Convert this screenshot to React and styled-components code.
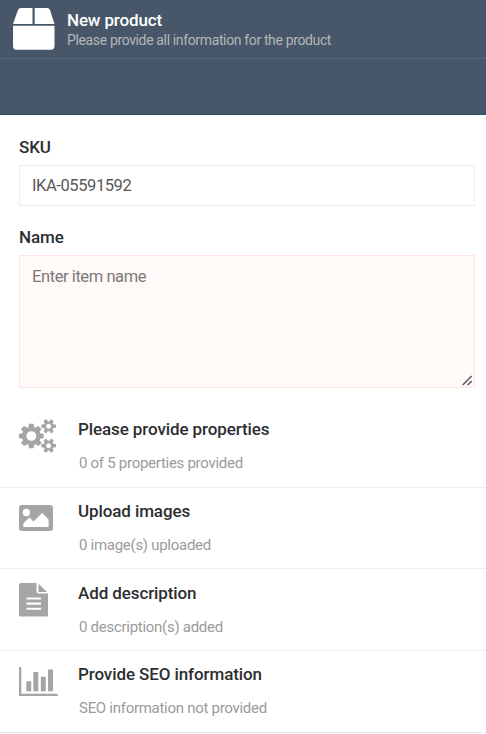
import React from "react";
import styled, { createGlobalStyle } from "styled-components";

const GlobalStyle = createGlobalStyle`
  * { box-sizing: border-box; }
  html, body { margin: 0; background: #fff; overflow: hidden; }
  body { font-family: Roboto, "Liberation Sans", sans-serif; color: #2d2e30; }
`;

const Page = styled.div`
  width: 486px;
  height: 734px;
  overflow: hidden;
`;

const Header = styled.header`
  height: 115px;
  background: #475769;
  border-bottom: 1px solid #364a62;
`;

const HeaderBar = styled.div`
  display: flex;
  height: 59px;
  padding: 8px 12px 0 13px;
  gap: 12px;
  border-bottom: 1px solid #58697b;
`;

const HeaderText = styled.div`
  padding-top: 2px;
`;

const HeaderTitle = styled.h1`
  margin: 0;
  font-size: 17px;
  line-height: 20px;
  font-weight: 500;
  letter-spacing: -0.15px;
  color: #fff;
`;

const HeaderSubtitle = styled.p`
  margin: 0;
  font-size: 14px;
  line-height: 20px;
  letter-spacing: -0.36px;
  color: #b4b6b9;
`;

const Form = styled.form`
  padding: 22px 11px 0 19px;
  height: 291px;
`;

const Label = styled.label`
  display: block;
  height: 28px;
  font-size: 17px;
  line-height: 20px;
  font-weight: 500;
  letter-spacing: -0.1px;
`;

const TextInput = styled.input`
  display: block;
  width: 100%;
  height: 41px;
  margin-bottom: 21px;
  padding: 0 12px 1px;
  border: 1px solid #ebecf3;
  border-radius: 0;
  outline: none;
  font: 400 16.5px/20px Roboto, sans-serif;
  letter-spacing: -0.42px;
  color: #58595b;
`;

const AreaWrap = styled.div`
  position: relative;
  height: 133px;
`;

const TextArea = styled.textarea`
  display: block;
  width: 100%;
  height: 100%;
  padding: 11px 12px;
  border: 1px solid #fde5e3;
  border-radius: 0;
  background: #fff9f7;
  outline: none;
  resize: none;
  font: 400 16.5px/20px Roboto, sans-serif;
  letter-spacing: -0.42px;
  &::placeholder { color: #7b7978; }
`;

const Grip = styled.svg`
  position: absolute;
  right: 2px;
  bottom: 2px;
`;

const StepList = styled.ul`
  margin: 0;
  padding: 0;
  list-style: none;
`;

const Step = styled.li`
  display: flex;
  height: 81.7px;
  padding-left: 19px;
  border-bottom: 1px solid #eeeef2;
`;

const StepIcon = styled.div`
  width: 59px;
  padding-top: ${(p) => p.$top}px;
  svg { display: block; fill: #a5a5a5; }
`;

const StepTitle = styled.h2`
  margin: 13.3px 0 14.1px;
  font-size: 17px;
  line-height: 20px;
  font-weight: 500;
  letter-spacing: -0.1px;
`;

const StepStatus = styled.p`
  margin: 0 0 0 1px;
  font-size: 15px;
  line-height: 20px;
  letter-spacing: -0.28px;
  color: #9b9b9b;
`;

const BoxIcon = () => (
  <svg width="42" height="42" viewBox="0 0 42 42" fill="#fff">
    <path d="M8 0H19.5V16H0L5 2Q5.7 0 8 0ZM21.7 0H34Q36.3 0 37 2L41.5 16H21.7ZM0 17.7H41.5V38Q41.5 41.7 38 41.7H3.5Q0 41.7 0 38Z" />
  </svg>
);

const smallGear =
  "v140q0 16-149 31-12 27-30 52 51 113 51 138 0 4-4 7-122 71-124 71-8 0-46-47t-52-68q-20 2-30 2t-30-2q-14 21-52 68t-46 47q-2 0-124-71-4-3-4-7 0-25 51-138-18-25-30-52-149-15-149-31v-140q0-16 149-31 13-29 30-52-51-113-51-138 0-4 4-7 4-2 35-20t59-34 30-16q8 0 46 46.5t52 67.5q20-2 30-2t30 2q51-71 92-112l6-2q4 0 124 70 4 3 4 7 0 25-51 138 17 23 30 52 149 15 149 31z";

const GearsIcon = () => (
  <svg width="37" height="34" viewBox="0 0 1920 1792" preserveAspectRatio="none">
    <path
      d={
        "M896 896q0-106-75-181t-181-75-181 75-75 181 75 181 181 75 181-75 75-181zm768 512q0-52-38-90t-90-38-90 38-38 90q0 53 37.5 90.5t90.5 37.5 90.5-37.5 37.5-90.5zm0-1024q0-52-38-90t-90-38-90 38-38 90q0 53 37.5 90.5t90.5 37.5 90.5-37.5 37.5-90.5zm-384 421v185q0 10-7 19.5t-16 10.5l-155 24q-11 35-32 76 34 48 90 115 7 11 7 20 0 12-7 19-23 30-82.5 89.5t-78.5 59.5q-11 0-21-7l-115-90q-37 19-77 31-11 108-23 155-7 24-30 24h-186q-11 0-20-7.5t-10-17.5l-23-153q-34-10-75-31l-118 89q-7 7-20 7-11 0-21-8-144-133-144-160 0-9 7-19 10-14 41-53t47-61q-23-44-35-82l-152-24q-10-1-17-9.5t-7-19.5v-185q0-10 7-19.5t16-10.5l155-24q11-35 32-76-34-48-90-115-7-11-7-20 0-12 7-20 22-30 82-89t79-59q11 0 21 7l115 90q34-18 77-32 11-108 23-154 7-24 30-24h186q11 0 20 7.5t10 17.5l23 153q34 10 75 31l118-89q8-7 20-7 11 0 21 8 144 133 144 160 0 8-7 19-12 16-42 54t-45 60q23 48 34 82l152 23q10 2 17 10.5t7 19.5zm640 533" +
        smallGear +
        "m0-1024" +
        smallGear
      }
    />
  </svg>
);

const ImageIcon = () => (
  <svg width="34" height="26" viewBox="0 0 34 26">
    <path
      fillRule="evenodd"
      d="M3 0H31Q34 0 34 3V23Q34 26 31 26H3Q0 26 0 23V3Q0 0 3 0ZM11 7.5A3.7 3.7 0 1 0 3.6 7.5A3.7 3.7 0 1 0 11 7.5ZM4.3 22H29.6V14.5L23.8 8.4Q23.2 7.8 22.6 8.4L14.5 16.4L11 12.9Q10.4 12.4 9.8 12.9L4.3 18.5Z"
    />
  </svg>
);

const DocumentIcon = () => (
  <svg width="29" height="34" viewBox="0 0 29 34">
    <path
      fillRule="evenodd"
      d="M1.5 0H17.5V8.5Q17.5 10.5 19.5 10.5H29V32Q29 33.5 27.5 33.5H1.5Q0 33.5 0 32V1.5Q0 0 1.5 0ZM7.5 14.5V16.4H22V14.5ZM7.5 19.5V21.7H22V19.5ZM7.5 24.7V26.8H22V24.7ZM19.5 .7L28 9H19.5Z"
    />
  </svg>
);

const ChartIcon = () => (
  <svg width="39" height="29" viewBox="0 0 39 29">
    <path d="M0 0H2.3V26.7H38.6V29H0ZM7.3 14.3H12.2V24.3H7.3ZM14.3 5H19.3V24.3H14.3ZM21.8 9.8H26.8V24.3H21.8ZM29 2.5H34V24.3H29Z" />
  </svg>
);

const steps = [
  { title: "Please provide properties", status: "0 of 5 properties provided", Icon: GearsIcon, top: 12.6 },
  { title: "Upload images", status: "0 image(s) uploaded", Icon: ImageIcon, top: 17.3 },
  { title: "Add description", status: "0 description(s) added", Icon: DocumentIcon, top: 13.6 },
  { title: "Provide SEO information", status: "SEO information not provided", Icon: ChartIcon, top: 15.9 },
];

export default function App() {
  return (
    <Page>
      <GlobalStyle />
      <Header>
        <HeaderBar>
          <BoxIcon />
          <HeaderText>
            <HeaderTitle>New product</HeaderTitle>
            <HeaderSubtitle>Please provide all information for the product</HeaderSubtitle>
          </HeaderText>
        </HeaderBar>
      </Header>
      <Form>
        <Label htmlFor="sku">SKU</Label>
        <TextInput id="sku" defaultValue="IKA-05591592" />
        <Label htmlFor="name">Name</Label>
        <AreaWrap>
          <TextArea id="name" placeholder="Enter item name" />
          <Grip width="11" height="11" viewBox="0 0 11 11" fill="none" stroke="#555" strokeWidth="1.4">
            <path d="M.7 10L9.7 1M5.7 10L9.7 6" />
          </Grip>
        </AreaWrap>
      </Form>
      <StepList>
        {steps.map(({ title, status, Icon, top }) => (
          <Step key={title}>
            <StepIcon $top={top}>
              <Icon />
            </StepIcon>
            <div>
              <StepTitle>{title}</StepTitle>
              <StepStatus>{status}</StepStatus>
            </div>
          </Step>
        ))}
      </StepList>
    </Page>
  );
}
